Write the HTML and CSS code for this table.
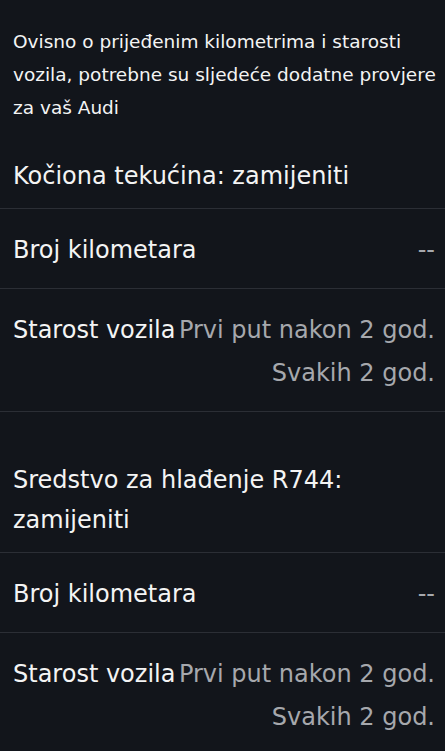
FILE: index.html
```html
<!DOCTYPE html>
<html lang="hr">
<head>
    <meta charset="UTF-8">
    <meta name="viewport" content="width=device-width, initial-scale=1.0">
    <title>Dodatne provjere</title>
    <link rel="stylesheet" href="styles.css">
</head>
<body>
    <div class="page">
        <p class="intro">Ovisno o prijeđenim kilometrima i starosti vozila, potrebne su sljedeće dodatne provjere za vaš Audi</p>

        <div class="section">
            <div class="section-title">Kočiona tekućina: zamijeniti</div>
            <div class="row">
                <span class="label">Broj kilometara</span>
                <span class="value">--</span>
            </div>
            <div class="row">
                <span class="label">Starost vozila</span>
                <span class="value">Prvi put nakon 2 god.<br>Svakih 2 god.</span>
            </div>
        </div>

        <div class="section">
            <div class="section-title">Sredstvo za hlađenje R744: zamijeniti</div>
            <div class="row">
                <span class="label">Broj kilometara</span>
                <span class="value">--</span>
            </div>
            <div class="row">
                <span class="label">Starost vozila</span>
                <span class="value">Prvi put nakon 2 god.<br>Svakih 2 god.</span>
            </div>
        </div>
    </div>
</body>
</html>
```

FILE: styles.css
```css
body {
    font-family: 'DejaVu Sans', sans-serif;
    background-color: #12151b;
    color: #f4f4f4;
    margin: 0;
    padding: 0;
}
.page {
    padding-top: 25px;
}
.intro {
    margin: 0 8px 18px 13px;
    font-size: 18.5px;
    line-height: 33px;
}
.section {
    border-bottom: 1px solid #2b2e35;
    margin-bottom: 34px;
}
.section-title {
    padding: 14px 13px 12px;
    font-size: 24px;
    line-height: 40px;
    border-bottom: 1px solid #2b2e35;
}
.row {
    display: flex;
    justify-content: space-between;
    margin: 0 10px 0 13px;
    padding: 20px 0 16px;
    font-size: 24px;
    line-height: 43px;
}
.row + .row {
    border-top: 1px solid #2b2e35;
}
.row:last-child {
    margin: 0;
    padding-left: 13px;
    padding-right: 10px;
}
.label {
    white-space: nowrap;
}
.value {
    color: #a6a8ad;
    text-align: right;
}
```
